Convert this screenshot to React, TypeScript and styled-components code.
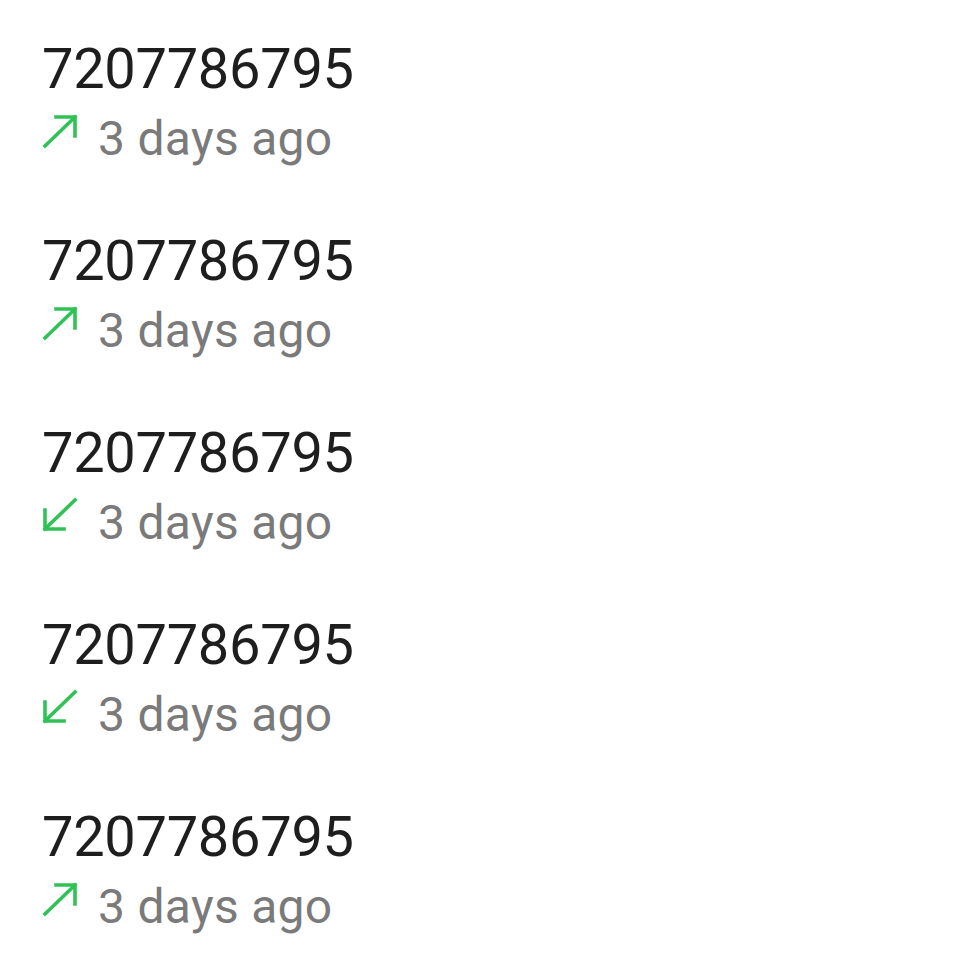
import styled, { createGlobalStyle } from 'styled-components';

const GlobalStyle = createGlobalStyle`
    body {
        margin: 0;
        background: #ffffff;
        font-family: Roboto, "Noto Sans", sans-serif;
    }
`

type CallProps = {
    number: string;
    when: string;
    direction: 'out' | 'in';
}

const calls: Array<CallProps> = [
    { number: '7207786795', when: '3 days ago', direction: 'out' },
    { number: '7207786795', when: '3 days ago', direction: 'out' },
    { number: '7207786795', when: '3 days ago', direction: 'in' },
    { number: '7207786795', when: '3 days ago', direction: 'in' },
    { number: '7207786795', when: '3 days ago', direction: 'out' },
];

const ArrowIcon = ({ direction }: { direction: 'out' | 'in' }) => (
    <StyledArrow viewBox="0 0 36 36" fill="none" stroke="#2fc257" strokeWidth="3.6" strokeLinecap="square">
        {direction === 'out' ? (
            <>
                <path d="M3 32 L33 3" />
                <path d="M14 3 H33 V22" />
            </>
        ) : (
            <>
                <path d="M33 3 L3 32" />
                <path d="M3 13 V32 H22" />
            </>
        )}
    </StyledArrow>
);

export default function App() {
    return (
        <>
            <GlobalStyle />
            <CallList>
                {calls.map((call, index) => (
                    <CallRow key={index}>
                        <Number>{call.number}</Number>
                        <Meta>
                            <ArrowSlot $in={call.direction === 'in'}>
                                <ArrowIcon direction={call.direction} />
                            </ArrowSlot>
                            <When>{call.when}</When>
                        </Meta>
                    </CallRow>
                ))}
            </CallList>
        </>
    );
}

const CallList = styled.div`
    display: flex;
    flex-direction: column;
    gap: 62px;
    padding: 37px 0 0 42px;
`

const CallRow = styled.div`
    display: flex;
    flex-direction: column;
`

const Number = styled.div`
    font-size: 56px;
    line-height: 64px;
    color: #1e1e1e;
    letter-spacing: -0.3px;
`

const Meta = styled.div`
    display: flex;
    align-items: center;
    margin-top: 10px;
    height: 56px;
`

const ArrowSlot = styled.div<{ $in: boolean }>`
    width: 36px;
    height: 36px;
    margin-right: 20px;
    align-self: flex-start;
    margin-top: ${(p) => (p.$in ? '2px' : '3px')};
`

const StyledArrow = styled.svg`
    width: 36px;
    height: 36px;
    display: block;
`

const When = styled.span`
    font-size: 48px;
    line-height: 56px;
    color: #7a7a7a;
    letter-spacing: 0.3px;
`
